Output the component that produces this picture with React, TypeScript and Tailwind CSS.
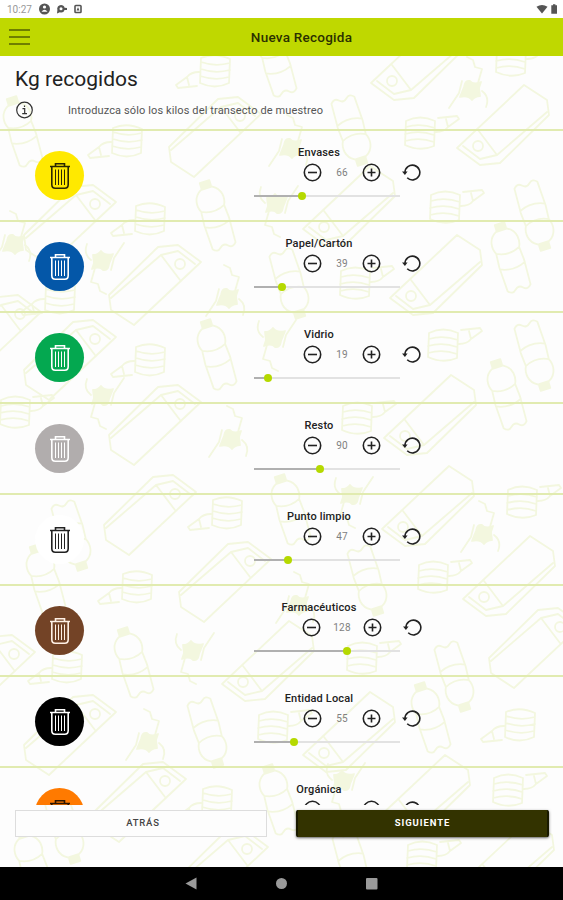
import React from 'react'

type Doodle = { x: number, y: number, flip?: boolean }

const bottles: Doodle[] = [
  {x:216, y:355}, {x:215, y:216}, {x:510, y:258}, {x:506, y:395}, {x:430, y:718}, {x:133, y:663},
  {x:290, y:510}, {x:45, y:580}, {x:278, y:800}, {x:33, y:865}, {x:276, y:62}, {x:22, y:132},
  {x:352, y:130, flip:true}, {x:290, y:283, flip:true}, {x:535, y:215, flip:true}, {x:535, y:355, flip:true},
  {x:368, y:580, flip:true}, {x:455, y:676, flip:true}, {x:208, y:732, flip:true}, {x:65, y:828, flip:true},
  {x:353, y:865, flip:true}, {x:72, y:535, flip:true},
]

const cartons: Doodle[] = [
  {x:155, y:425}, {x:155, y:285}, {x:150, y:515}, {x:215, y:137}, {x:70, y:225}, {x:225, y:582},
  {x:70, y:360}, {x:70, y:735}, {x:140, y:802}, {x:222, y:870}, {x:535, y:648}, {x:-11, y:675}, {x:-5, y:335},
  {x:436, y:275, flip:true}, {x:503, y:125, flip:true}, {x:417, y:60, flip:true}, {x:428, y:506, flip:true},
  {x:509, y:576, flip:true}, {x:268, y:661, flip:true}, {x:349, y:206, flip:true}, {x:430, y:415, flip:true},
  {x:349, y:732, flip:true}, {x:424, y:795, flip:true}, {x:508, y:860, flip:true},
]

const tubs: Doodle[] = [
  {x:150, y:360}, {x:150, y:219}, {x:215, y:71}, {x:127, y:141}, {x:227, y:513}, {x:137, y:587},
  {x:67, y:667}, {x:217, y:802}, {x:520, y:725}, {x:60, y:298},
  {x:445, y:207, flip:true}, {x:443, y:345, flip:true}, {x:357, y:418, flip:true}, {x:522, y:502, flip:true},
  {x:433, y:577, flip:true}, {x:362, y:658, flip:true}, {x:273, y:727, flip:true}, {x:508, y:790, flip:true},
  {x:422, y:857, flip:true}, {x:355, y:283, flip:true}, {x:420, y:133, flip:true}, {x:511, y:60, flip:true},
  {x:15, y:412, flip:true},
]

const masks: Doodle[] = [
  {x:193, y:653}, {x:103, y:398}, {x:103, y:263}, {x:277, y:206}, {x:275, y:340}, {x:352, y:497}, {x:344, y:783},
  {x:147, y:740, flip:true}, {x:230, y:437, flip:true}, {x:290, y:146, flip:true}, {x:227, y:296, flip:true},
  {x:470, y:88, flip:true}, {x:482, y:532, flip:true}, {x:13, y:242, flip:true}, {x:297, y:603, flip:true},
]

const place = (d: Doodle) => `translate(${d.x} ${d.y})${d.flip ? ' rotate(180)' : ''}`

const Pattern = () => (
  <svg className='absolute inset-0' width='563' height='811' viewBox='0 56 563 811' fill='none' stroke='#f3f7df' strokeWidth='1.8' strokeLinejoin='round' strokeLinecap='round'>
    {bottles.map((d, i) => (
      <g key={i} transform={place(d)}>
        <g transform='rotate(-17)'>
          <path d='M-6 -29C-15 -24 -15 -14 -12 -8L-13 6L-12 31Q-8 36 -4 32Q0 28 4 32Q8 36 12 31L13 6L12 -8C15 -14 15 -24 6 -29ZM-12 -8Q0 -2 12 -8M-13 8Q0 14 13 8' />
          <path d='M-5 -36H5V-30H-5Z' fill='#f3f7df' />
        </g>
      </g>
    ))}
    {cartons.map((d, i) => (
      <g key={i} transform={place(d)}>
        <path d='M-46 10L3 -38L23 -40L46 -23L-21 40L-44 25ZM-44 13L6 -30L25 -5M6 -30L23 -34L40 -21' />
        <circle cx='25' cy='-21' r='5' />
      </g>
    ))}
    {tubs.map((d, i) => (
      <g key={i} transform={place(d)}>
        <path d='M-14 -13Q0 -19 15 -12L14 12Q0 19 -15 12ZM-14 -9Q0 -4 15 -8M-14 -2Q0 3 15 -1M-15 5Q0 10 14 6M-16 1Q-24 1 -28 6L-39 14L-37 17L-18 15M-28 6L-26 14' />
      </g>
    ))}
    {masks.map((d, i) => (
      <g key={i} transform={place(d)}>
        <path d='M-16 -19Q-20 -9 -12 -3M21 -20L11 -5L8 7M-8 5L-12 19L-5 21L-3 28L3 31' />
        <path d='M-10 -8Q-5 -8 -2 -12Q2 -7 10 -9L6 1Q5 8 0 7Q-3 3 -11 6L-9 0Z' fill='#f3f7df' />
      </g>
    ))}
  </svg>
)

const bins = [
  {name:'Envases', kg:66, bg:'bg-[#ffe900]', icon:'text-[#2b2700]'},
  {name:'Papel/Cartón', kg:39, bg:'bg-[#0457a8]', icon:'text-white'},
  {name:'Vidrio', kg:19, bg:'bg-[#04a850]', icon:'text-white'},
  {name:'Resto', kg:90, bg:'bg-[#b1adad]', icon:'text-white'},
  {name:'Punto limpio', kg:47, bg:'bg-white', icon:'text-[#222]'},
  {name:'Farmacéuticos', kg:128, bg:'bg-[#734326]', icon:'text-[#fff0e4]'},
  {name:'Entidad Local', kg:55, bg:'bg-black', icon:'text-white'},
  {name:'Orgánica', kg:30, bg:'bg-[#ff7a00]', icon:'text-[#2b1500]'},
]

const maxKg = 200

const TrashIcon = () => (
  <svg width='22' height='28' viewBox='0 0 22 28' fill='none' stroke='currentColor'>
    <path d='M1 4.5H21' strokeWidth='1.5' />
    <path d='M6.5 4V1.7H15.5V4' strokeWidth='1.6' />
    <path d='M2.8 5V22.5Q2.8 26.2 6.3 26.2H15.7Q19.2 26.2 19.2 22.5V5' strokeWidth='1.6' />
    <path d='M6.5 7.5V23M9.5 7.5V23M12.5 7.5V23M15.5 7.5V23' strokeWidth='1' />
  </svg>
)

const RoundButton = ({ plus }: { plus?: boolean }) => (
  <button className='size-[19px] shrink-0'>
    <svg width='19' height='19' viewBox='0 0 19 19' fill='none' stroke='#222' strokeWidth='1.6'>
      <circle cx='9.5' cy='9.5' r='8.2' />
      <path d={plus ? 'M5.5 9.5H13.5M9.5 5.5V13.5' : 'M5 9.5H14'} />
    </svg>
  </button>
)

const ResetIcon = () => (
  <svg width='19' height='19' viewBox='0 0 19 19' fill='none' stroke='#222' strokeWidth='1.6'>
    <path d='M3 9.5A7.4 7.4 0 1 1 5.2 14.8' />
    <path d='M0 8.6H5.6L2.9 12Z' fill='#222' stroke='none' />
  </svg>
)

const BinRow = ({ bin }: { bin: typeof bins[number] }) => (
  <li className='flex h-[91px] shrink-0 border-t-2 border-[#e1ebb0]'>
    <div className={`mt-5 ml-[35px] flex size-[49px] items-center justify-center rounded-full ${bin.bg} ${bin.icon}`}>
      <TrashIcon />
    </div>
    <div className='ml-[170px] w-[146px] pt-[15px]'>
      <h3 className='-ml-2 w-[146px] text-center text-[11px] leading-[13px] font-medium tracking-[0.15px] text-[#222]'>{bin.name}</h3>
      <div className='ml-[18px] flex h-[26px] w-[180px] items-center justify-center'>
        <RoundButton plus={false} />
        <span className='mx-3 min-w-4 text-center text-[10px] tracking-[0.2px] text-[#808080]'>{bin.kg}</span>
        <RoundButton plus />
        <button className='ml-[21px]'><ResetIcon /></button>
      </div>
      <div className='mt-1.5 flex h-2.5 items-center'>
        <div className='h-0.5 bg-[#b0b0b0]' style={{ width: `${bin.kg / maxKg * 100}%` }}></div>
        <div className='z-10 -mx-1 size-2 shrink-0 rounded-full bg-[#b5d900]'></div>
        <div className='h-0.5 flex-1 bg-[#e2e2e2]'></div>
      </div>
    </div>
  </li>
)

const StatusBar = () => (
  <div className='flex h-[18px] items-center justify-between bg-white pr-[5px] pl-[7px] text-[#555]'>
    <div className='flex items-center'>
      <span className='w-8 text-[10px] text-[#999]'>10:27</span>
      <svg width='44' height='12' viewBox='0 0 44 12' fill='currentColor'>
        <circle cx='5.5' cy='6' r='5.5' />
        <circle cx='5.5' cy='4' r='1.6' fill='#fff' />
        <path d='M2.5 8.7Q5.5 4.7 8.5 8.7Z' fill='#fff' />
        <path d='M22 2A3.8 3.8 0 0 1 25.6 4.8L28 5V7L25.6 7A3.8 3.8 0 0 1 20.8 9.3L18 10.5L18.4 7A3.8 3.8 0 0 1 22 2Z' />
        <circle cx='22' cy='5.8' r='1.5' fill='#fff' />
        <rect x='36' y='2.5' width='6' height='7' rx='0.8' fill='none' stroke='currentColor' strokeWidth='1.6' />
        <path d='M37.5 7.5L39 4.3L40.5 7.5Z' />
      </svg>
    </div>
    <svg width='22' height='12' viewBox='0 0 22 12' fill='currentColor'>
      <path d='M0.5 3.8Q6 0 11.5 3.8L6 10.5Z' />
      <path d='M15.3 2.2H17V1.2H19.4V2.2H21V10.8H15.3Z' />
    </svg>
  </div>
)

export default function App() {
  return (
    <div className='flex h-[900px] w-[563px] flex-col overflow-hidden bg-[#fdfdfd] font-[Roboto,sans-serif]'>
      <StatusBar />
      <header className='grid h-[38px] grid-cols-[1fr_auto_1fr] items-center bg-[#bfd800] px-[9px]'>
        <button className='flex w-[21px] flex-col gap-[5px]'>
          <span className='h-0.5 bg-[#6f7e00]'></span>
          <span className='h-0.5 bg-[#6f7e00]'></span>
          <span className='h-0.5 bg-[#6f7e00]'></span>
        </button>
        <h1 className='ml-10 text-[13.5px] font-medium tracking-[0.25px] text-[#2b3000]'>Nueva Recogida</h1>
      </header>
      <main className='relative flex h-[811px] flex-col overflow-hidden'>
        <Pattern />
        <div className='relative flex h-[73px] shrink-0 flex-col pl-[15px]'>
          <h2 className='mt-[9px] text-[21px] leading-7 tracking-[0.04px] text-[#222]'>Kg recogidos</h2>
          <div className='mt-2 flex items-center'>
            <svg width='18' height='18' viewBox='0 0 18 18' fill='none' stroke='#333' strokeWidth='1.2'>
              <circle cx='9.5' cy='9' r='7.8' />
              <path d='M7.5 7.7H9.7V12.6M7.2 12.7H12M9.5 4.5V6' />
            </svg>
            <p className='ml-[35px] pt-0.5 text-[11px] tracking-[0.12px] text-[#555]'>Introduzca sólo los kilos del transecto de muestreo</p>
          </div>
        </div>
        <ul className='relative flex h-[676px] shrink-0 flex-col overflow-hidden'>
          {bins.map((bin) => <BinRow key={bin.name} bin={bin} />)}
        </ul>
        <div className='relative mt-[5px] grid grid-cols-[252px_253px] gap-[29px] pl-[15px]'>
          <button className='h-[27px] border border-[#ddd] bg-[#fdfdfd] pl-1 text-[9.5px] font-medium tracking-[0.8px] text-[#444]'>ATRÁS</button>
          <button className='h-[27px] rounded-xs border-x-2 border-[#191a00] bg-[#333300] text-[9.5px] font-bold tracking-[0.9px] text-white shadow-sm shadow-black/50'>SIGUIENTE</button>
        </div>
      </main>
      <nav className='flex h-[33px] items-center bg-black text-[#9a9a9a]'>
        <svg width='563' height='33' viewBox='0 0 563 33' fill='currentColor'>
          <path d='M185.5 16.5L196.5 10.5V22.5Z' />
          <circle cx='281.5' cy='16.5' r='5.5' />
          <rect x='366' y='11' width='11.5' height='11.5' rx='1' />
        </svg>
      </nav>
    </div>
  )
}
